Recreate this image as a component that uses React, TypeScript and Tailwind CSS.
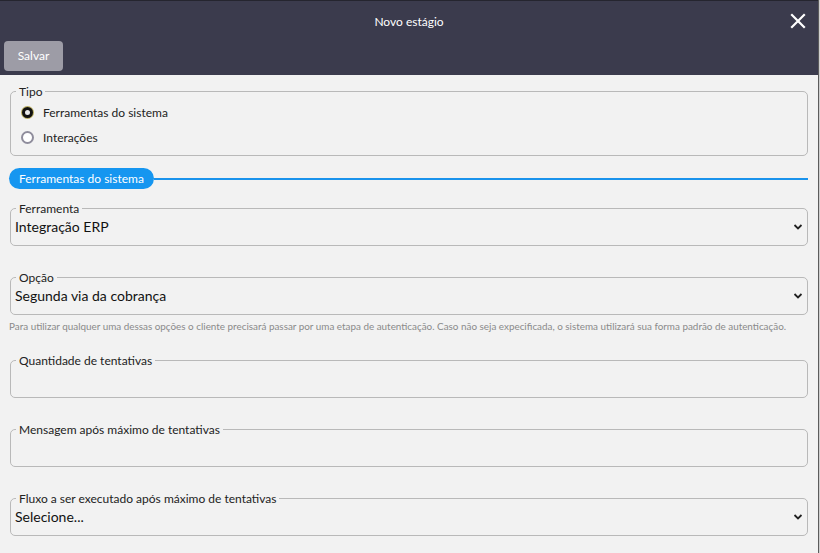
import React from "react";

function Chevron() {
  return (
    <svg width="10" height="7" viewBox="0 0 10 7" className="absolute right-[4px] top-1/2 -translate-y-1/2">
      <path d="M1.5 1.5 L5 5 L8.5 1.5" fill="none" stroke="#222" strokeWidth="1.8" />
    </svg>
  );
}

function Field({ label, value, select }: { label: string; value?: string; select?: boolean }) {
  return (
    <fieldset className="border border-[#b9b9b9] rounded-[5px] mx-[10px] h-[45px] relative">
      <legend className="ml-[5px] px-[3px] text-[12px] leading-[15px] text-[#222]">{label}</legend>
      <div className="relative h-[22px] px-[4px] text-[14px] leading-[22px] text-[#111]">
        {value}
        {select && <Chevron />}
      </div>
    </fieldset>
  );
}

export default function App() {
  return (
    <div className="w-[820px] h-[553px] overflow-hidden flex bg-[#f2f2f2]" style={{ fontFamily: "Lato, 'Noto Sans', sans-serif" }}>
      <div className="flex-1 flex flex-col min-w-0">
        <div className="h-[75px] bg-[#3b3b4d] border-t border-[#25252f] relative flex flex-col">
          <div className="text-center text-white text-[12px] leading-[15px] mt-[13px]">Novo estágio</div>
          <svg width="16" height="16" viewBox="0 0 16 16" className="absolute right-[12px] top-[12px]">
            <path d="M2 2 L14 14 M14 2 L2 14" stroke="#fff" strokeWidth="2.2" strokeLinecap="square" />
          </svg>
          <button className="ml-[4px] mt-[12px] w-[59px] h-[30px] rounded-[4px] bg-[#9d9ca6] text-white text-[12px]">Salvar</button>
        </div>
        <div className="flex flex-col">
          <fieldset className="border border-[#b9b9b9] rounded-[5px] mx-[10px] mt-[9px] pb-[5px]">
            <legend className="ml-[5px] px-[3px] text-[12px] leading-[15px] text-[#222]">Tipo</legend>
            <div className="pt-[1px]">
              <div className="h-[25px] flex items-center pl-[10px] gap-[9px]">
                <span className="w-[13px] h-[13px] rounded-full bg-[#b5aa5c] flex items-center justify-center">
                  <span className="w-[11px] h-[11px] rounded-full border-[3px] border-[#111] bg-[#eaeaea]" />
                </span>
                <span className="text-[12px] text-[#222]">Ferramentas do sistema</span>
              </div>
              <div className="h-[25px] flex items-center pl-[10px] gap-[9px]">
                <span className="w-[13px] h-[13px] rounded-full border-2 border-[#8f8d9c] bg-white" />
                <span className="text-[12px] text-[#222]">Interações</span>
              </div>
            </div>
          </fieldset>
          <div className="flex items-center mt-[12px] ml-[9px] mr-[10px]">
            <div className="h-[21px] px-[10px] rounded-full bg-[#1696f0] text-white text-[12px] leading-[21px] whitespace-nowrap">Ferramentas do sistema</div>
            <div className="flex-1 h-[2px] bg-[#1a93ec]" />
          </div>
          <div className="mt-[12px]">
            <Field label="Ferramenta" value="Integração ERP" select />
          </div>
          <div className="mt-[24px]">
            <Field label="Opção" value="Segunda via da cobrança" select />
          </div>
          <div className="mx-[9px] mt-[5px] text-[9.9px] leading-[12px] text-[#8a8a8a] whitespace-nowrap">
            Para utilizar qualquer uma dessas opções o cliente precisará passar por uma etapa de autenticação. Caso não seja expecificada, o sistema utilizará sua forma padrão de autenticação.
          </div>
          <div className="mt-[21px]">
            <Field label="Quantidade de tentativas" />
          </div>
          <div className="mt-[24px]">
            <Field label="Mensagem após máximo de tentativas" />
          </div>
          <div className="mt-[24px]">
            <Field label="Fluxo a ser executado após máximo de tentativas" value="Selecione..." select />
          </div>
        </div>
      </div>
      <div className="w-[2px] flex">
        <div className="w-[1px] bg-[#5c5c5c]" />
        <div className="w-[1px] bg-[#cfcfcf]" />
      </div>
    </div>
  );
}
